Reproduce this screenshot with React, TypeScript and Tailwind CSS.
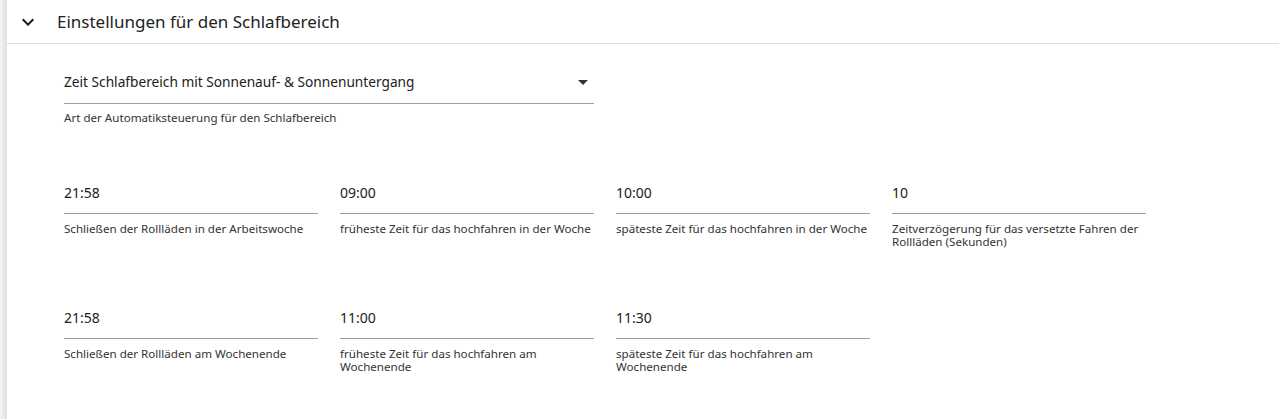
const FONT = "font-['Noto_Sans',_'Open_Sans',_sans-serif]";

type Field = { value: string; label: string };

const weekRow: Field[] = [
  { value: "21:58", label: "Schließen der Rollläden in der Arbeitswoche" },
  { value: "09:00", label: "früheste Zeit für das hochfahren in der Woche" },
  { value: "10:00", label: "späteste Zeit für das hochfahren in der Woche" },
  { value: "10", label: "Zeitverzögerung für das versetzte Fahren der Rollläden (Sekunden)" },
];

const weekendRow: Field[] = [
  { value: "21:58", label: "Schließen der Rollläden am Wochenende" },
  { value: "11:00", label: "früheste Zeit für das hochfahren am Wochenende" },
  { value: "11:30", label: "späteste Zeit für das hochfahren am Wochenende" },
];

const TextField = ({ value, label }: Field) => (
  <div className="w-[254px] shrink-0">
    <div className="h-[40px] pt-[10px] text-[14px] leading-[20px] text-[#212121]">{value}</div>
    <div className="h-px bg-[#9e9e9e]" />
    <div className="pt-[8px] text-[11.6px] leading-[13px] text-[#333]">{label}</div>
  </div>
);

export default function App() {
  return (
    <div className={`${FONT} w-[1279px] h-[419px] bg-white flex overflow-hidden`}>
      {/* card shadow on the left */}
      <div className="w-[7px] shrink-0 bg-gradient-to-r from-[#f4f4f4] to-[#dedede]" />

      <div className="flex-1 flex flex-col">
        {/* header */}
        <div className="h-[44px] flex items-center border-b border-[#e0e0e0]">
          <svg className="ml-[9px] w-[24px] h-[24px]" viewBox="0 0 24 24">
            <path d="M7.41 8.59 12 13.17l4.59-4.58L18 10l-6 6-6-6z" fill="#0d1b2a" />
          </svg>
          <span className="ml-[17px] text-[17px] text-[#222]">Einstellungen für den Schlafbereich</span>
        </div>

        <div className="pl-[57px] pt-[17px]">
          {/* select */}
          <div className="w-[530px]">
            <div className="h-[42px] flex items-center justify-between pr-[6px]">
              <span className="text-[13.7px] text-[#212121]">Zeit Schlafbereich mit Sonnenauf- &amp; Sonnenuntergang</span>
              <svg className="w-[10px] h-[5px]" viewBox="0 0 10 5">
                <path d="M0 0h10L5 5z" fill="#333" />
              </svg>
            </div>
            <div className="h-px bg-[#9e9e9e]" />
            <div className="pt-[7px] text-[11.6px] leading-[13px] text-[#333]">
              Art der Automatiksteuerung für den Schlafbereich
            </div>
          </div>

          <div className="mt-[49px] flex gap-[22px]">
            {weekRow.map((f, i) => (
              <TextField key={i} {...f} />
            ))}
          </div>

          <div className="mt-[50px] flex gap-[22px]">
            {weekendRow.map((f, i) => (
              <TextField key={i} {...f} />
            ))}
          </div>
        </div>
      </div>
    </div>
  );
}
